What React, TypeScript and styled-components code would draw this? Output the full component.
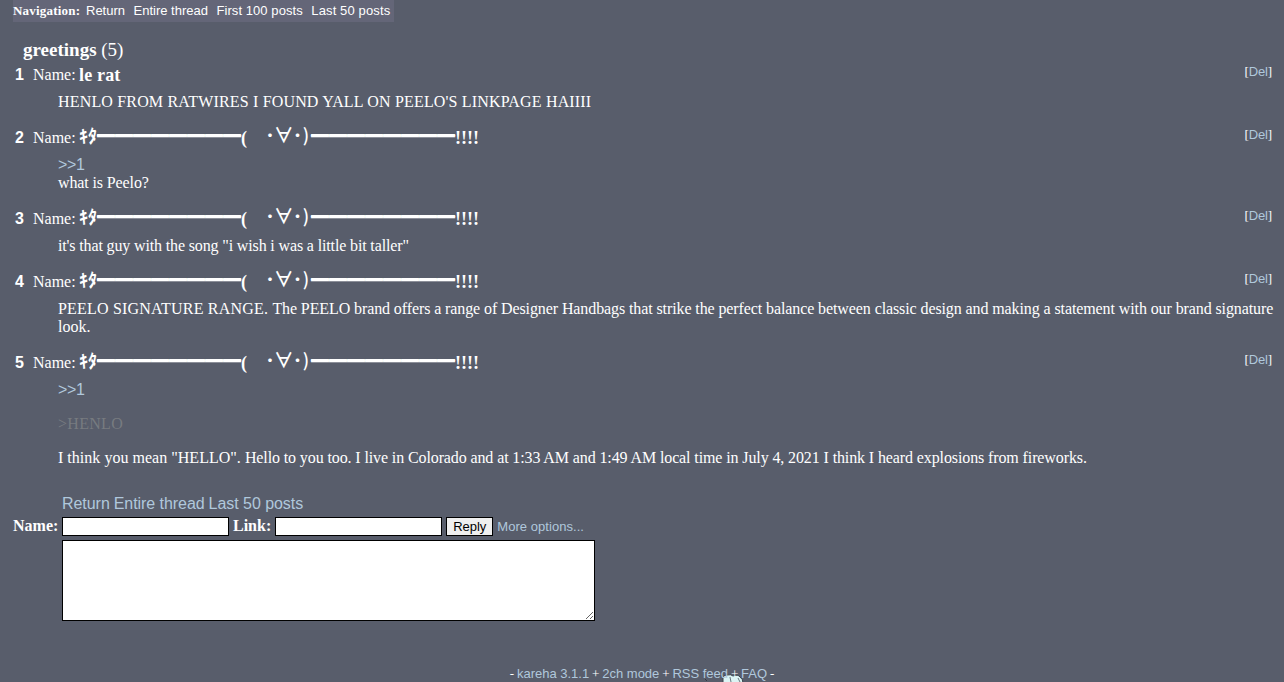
import React from "react";
import styled, { createGlobalStyle } from "styled-components";

const serif = `"Liberation Serif", "Noto Sans CJK JP", serif`;
const sans = `"Liberation Sans", sans-serif`;

const GlobalStyle = createGlobalStyle`
  body {
    margin: 0;
    background: #585d6b;
    color: #fff;
    font: 16px/18px ${serif};
  }
`;

const Page = styled.div`
  box-sizing: border-box;
  height: 682px;
  overflow: hidden;
  padding: 0 10px 0 13px;
`;

const Link = styled.a<{ $small?: boolean }>`
  color: #b0c8dc;
  font-family: ${sans};
  font-size: ${(p) => (p.$small ? "13px" : "16px")};
  text-decoration: none;
`;

const Navigation = styled.nav`
  display: flex;
  width: 381px;
  height: 22px;
  line-height: 22px;
  font-size: 13px;
  background: #646678;

  strong {
    width: 67px;
    letter-spacing: 0.2px;
  }
`;

const NavLink = styled.a<{ $spacing?: number }>`
  margin-left: 8.5px;
  color: #fff;
  font-family: ${sans};
  letter-spacing: ${(p) => p.$spacing ?? 0}px;

  strong + & {
    margin-left: 6px;
  }
`;

const Title = styled.h2`
  margin: 17px 0 0 10px;
  height: 25px;
  font-size: 19px;
  line-height: 22px;
  font-weight: normal;
`;

const Post = styled.article`
  margin-bottom: 16px;
`;

const PostHeader = styled.header`
  display: flex;
  height: 22px;
  margin-bottom: 7px;
  padding: 0 2px 0 2px;
  line-height: 22px;
`;

const PostNumber = styled.span`
  width: 18px;
  font-family: ${sans};
  font-weight: bold;
`;

const PosterName = styled.strong`
  margin-left: 3.4px;
  font-size: 18px;
  white-space: pre;
`;

const Kana = styled.span`
  font-family: "Noto Sans CJK JP", sans-serif;
  line-height: 1px;
  vertical-align: 1px;
`;

const Bar = styled(Kana)`
  vertical-align: 2px;
  text-shadow: 0 1px #fff;
`;

const Face = styled(Kana)`
  font-size: 20px;
  font-weight: 500;
  letter-spacing: -1.33px;
`;

const Paren = styled(Kana)`
  display: inline-block;
  width: 10px;
  font-weight: 500;
  text-align: center;
  vertical-align: 2px;
`;

const Delete = styled.span`
  margin-left: auto;
  font-size: 13px;
  line-height: 16px;
  letter-spacing: -0.15px;
`;

const PostBody = styled.div`
  margin: 0 -3px 0 45px;

  p {
    margin: 0 0 16px;
  }
`;

const Text = styled.span<{ $spacing: number }>`
  letter-spacing: ${(p) => p.$spacing}px;
`;

const Quote = styled(Text)`
  color: #777b80;
`;

const ReplyForm = styled.form`
  display: grid;
  grid-template-columns: 45px 1fr;
  gap: 4px;
  padding-top: 12px;
`;

const Label = styled.label`
  font-weight: bold;
`;

const Fields = styled.div`
  display: flex;
  gap: 4px;
  height: 19px;
`;

const Input = styled.input`
  box-sizing: border-box;
  width: 167px;
  height: 19px;
  padding: 1px 2px;
  border: 1px solid #000;
  background: #fff;
`;

const Button = styled.button`
  box-sizing: border-box;
  width: 47px;
  height: 19px;
  padding: 0;
  border: 1px solid #000;
  background: #efefef;
  color: #000;
  font: 13px ${sans};
`;

const MoreOptions = styled(Link)`
  line-height: 20px;
  letter-spacing: 0.05px;
`;

const Comment = styled.textarea`
  box-sizing: border-box;
  display: block;
  width: 533px;
  height: 81px;
  border: 1px solid #000;
  background: #fff;
`;

const FormRow = styled.div`
  grid-column: 2;
`;

const ThreadLinks = styled(FormRow)`
  letter-spacing: -0.05px;
`;

const Footer = styled.footer`
  position: relative;
  isolation: isolate;
  margin-top: 44px;
  padding-right: 3px;
  text-align: center;
  font-size: 13px;
  word-spacing: -0.4px;

  a {
    word-spacing: 0;
  }
`;

const Mascot = styled.svg`
  position: absolute;
  z-index: -1;
  left: 689px;
  top: 9px;
`;

const Kita = () => (
  <>
    <Kana>ｷﾀ</Kana>
    <Bar>{"━".repeat(8)}</Bar>(　<Face>･∀･</Face>
    <Paren>)</Paren>
    <Bar>{"━".repeat(8)}</Bar>!!!!
  </>
);

const reply = (
  <Text $spacing={-0.3}>
    <Link>&gt;&gt;1</Link>
  </Text>
);

const posts = [
  {
    name: <Text $spacing={0.15}>le rat</Text>,
    body: (
      <Text $spacing={0.17}>
        HENLO FROM RATWIRES I FOUND YALL ON PEELO'S LINKPAGE HAIIII
      </Text>
    ),
  },
  {
    name: <Kita />,
    body: (
      <>
        {reply}
        <br />
        <Text $spacing={-0.12}>what is Peelo?</Text>
      </>
    ),
  },
  {
    name: <Kita />,
    body: (
      <Text $spacing={-0.14}>
        it's that guy with the song "i wish i was a little bit taller"
      </Text>
    ),
  },
  {
    name: <Kita />,
    body: (
      <>
        <Text $spacing={0.2}>PEELO SIGNATURE RANGE. </Text>
        <Text $spacing={-0.1}>
          The PEELO brand offers a range of Designer Handbags that strike the
          perfect balance between classic design and making a statement with
          our brand signature
        </Text>{" "}
        <Text $spacing={0}>look.</Text>
      </>
    ),
  },
  {
    name: <Kita />,
    body: (
      <>
        <p>{reply}</p>
        <p>
          <Quote $spacing={0.3}>&gt;HENLO</Quote>
        </p>
        <p>
          <Text $spacing={0.02}>I think you mean "HELLO". </Text>
          <Text $spacing={-0.112}>
            Hello to you too. I live in Colorado and at 1:33 AM and 1:49 AM
            local time in July 4, 2021 I think I heard explosions from
            fireworks.
          </Text>
        </p>
      </>
    ),
  },
];

function App() {
  return (
    <Page>
      <GlobalStyle />
      <Navigation>
        <strong>Navigation:</strong>
        <NavLink>Return</NavLink>
        <NavLink>Entire thread</NavLink>
        <NavLink $spacing={0.07}>First 100 posts</NavLink>
        <NavLink $spacing={0.13}>Last 50 posts</NavLink>
      </Navigation>
      <Title>
        <strong>greetings</strong> (5)
      </Title>
      {posts.map((post, i) => (
        <Post key={i}>
          <PostHeader>
            <PostNumber>{i + 1}</PostNumber>
            <span>Name:</span>
            <PosterName>{post.name}</PosterName>
            <Delete>
              [<Link $small>Del</Link>]
            </Delete>
          </PostHeader>
          <PostBody>{post.body}</PostBody>
        </Post>
      ))}
      <ReplyForm>
        <ThreadLinks>
          <Link>Return</Link> <Link>Entire thread</Link>{" "}
          <Link>Last 50 posts</Link>
        </ThreadLinks>
        <Label>Name:</Label>
        <Fields>
          <Input />
          <Label>Link:</Label>
          <Input />
          <Button type="button">Reply</Button>
          <MoreOptions $small>More options...</MoreOptions>
        </Fields>
        <FormRow>
          <Comment />
        </FormRow>
      </ReplyForm>
      <Footer>
        <Mascot width="46" height="8" viewBox="0 0 46 8" fill="none">
          <path
            d="M21 9V4Q21 1 25 1Q29 0 31 2Q36 0 38 3Q41 5 41 9Z"
            fill="#dcf4f4"
            stroke="#3b444c"
          />
          <path
            d="M28 3L29 8M36 4L38 8"
            stroke="#3b444c"
            strokeWidth="0.7"
          />
          <path d="M3 5L5 7" stroke="#363b45" />
        </Mascot>
        - <Link $small>kareha 3.1.1</Link> + <Link $small>2ch mode</Link> +{" "}
        <Link $small>RSS feed</Link> + <Link $small>FAQ</Link> -
      </Footer>
    </Page>
  );
}

export default App;
